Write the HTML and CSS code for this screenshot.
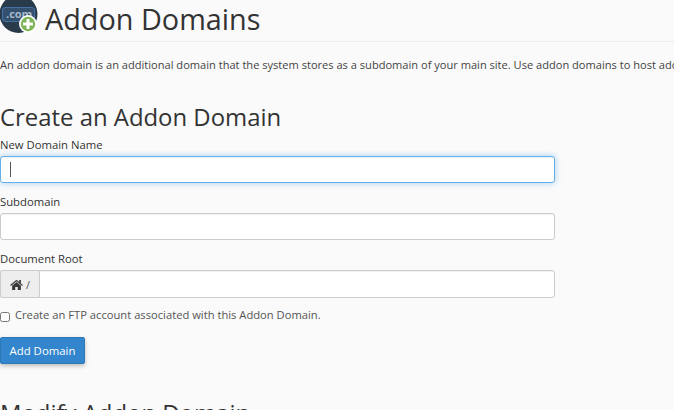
FILE: index.html
```html
<!DOCTYPE html>
<html lang="en">
<head>
<meta charset="utf-8">
<title>Addon Domains</title>
<link rel="stylesheet" href="styles.css">
</head>
<body>
<header class="page-header">
  <svg class="logo" width="38" height="34" viewBox="0 0 38 34" aria-hidden="true">
    <circle cx="18.5" cy="14" r="19" fill="#293a4a"/>
    <rect x="2.5" y="7.5" width="32" height="14" rx="3" fill="#34506f" stroke="#44709f" stroke-width="1.2"/>
    <text x="6" y="18" class="logo-text">.com</text>
    <circle cx="28" cy="24" r="9" fill="#fff"/>
    <circle cx="28" cy="24" r="7.2" fill="#7cb554"/>
    <path d="M28 19v10M23 24h10" stroke="#fff" stroke-width="3"/>
  </svg>
  <h1>Addon Domains</h1>
</header>
<p class="intro">An addon domain is an additional domain that the system stores as a subdomain of your main site. Use addon domains to host additional websites from a single account.</p>
<h2 class="section-title">Create an Addon Domain</h2>
<form class="domain-form">
  <div class="field">
    <label class="field-label" for="domain">New Domain Name</label>
    <div class="input focused" id="domain"><span class="caret"></span></div>
  </div>
  <div class="field">
    <label class="field-label" for="sub">Subdomain</label>
    <input class="input" id="sub" type="text">
  </div>
  <div class="field">
    <label class="field-label" for="root">Document Root</label>
    <div class="input-group">
      <span class="addon">
        <svg width="13" height="11" viewBox="0 0 14 12" aria-hidden="true"><path d="M7 .8 0 6.6l.8 1L7 2.5l6.2 5.1.8-1-2.2-1.8V1.2h-1.9v2L7 .8ZM2.2 7.3V12h3.4V8.6h2.8V12h3.4V7.3L7 3.4 2.2 7.3Z" fill="#3a3a3a"/></svg>
        <span>/</span>
      </span>
      <input class="input group-input" id="root" type="text">
    </div>
  </div>
  <label class="check-row"><input class="check" type="checkbox"><span>Create an FTP account associated with this Addon Domain.</span></label>
  <button class="btn" type="button">Add Domain</button>
</form>
<h2 class="section-title modify">Modify Addon Domain</h2>
</body>
</html>
```
FILE: styles.css
```css
html, body { margin: 0; height: 410px; overflow: hidden; }
body { background: #fafafa; color: #333; font-family: "Open Sans", sans-serif; font-size: 12px; }
.page-header { display: flex; align-items: flex-start; height: 41px; border-bottom: 1px solid #eee; }
.logo { flex: none; }
.logo-text { font-family: "Open Sans", sans-serif; font-size: 11px; font-weight: 700; fill: #a9bacb; }
h1 { margin: 0 0 0 7px; font-size: 28.8px; font-weight: 400; line-height: 38px; white-space: nowrap; }
.intro { margin: 14px 0 0; line-height: 17px; font-size: 11.08px; white-space: nowrap; color: #444; }
.section-title { margin: 29px 0 5px; font-size: 23.9px; font-weight: 400; line-height: 30px; white-space: nowrap; }
.domain-form { width: 555px; }
.field { margin-bottom: 11px; }
.field-label { display: block; font-size: 11.3px; font-weight: 500; line-height: 16px; margin-bottom: 3px; }
.input { display: block; box-sizing: border-box; width: 100%; height: 27px; padding: 0 9px; background: #fff; border: 1px solid #ccc; border-radius: 3px; outline: 0; box-shadow: inset 0 1px 1px rgba(0,0,0,.06); }
.focused { border-color: #66afe9; box-shadow: inset 0 1px 1px rgba(0,0,0,.06), 0 0 6px rgba(102,175,233,.6); display: flex; align-items: center; }
.caret { width: 1px; height: 15px; background: #555; }
.input-group { display: flex; }
.addon { display: flex; align-items: center; gap: 3px; width: 39px; height: 28px; box-sizing: border-box; padding-left: 9px; flex: none; background: #eee; border: 1px solid #ccc; border-right: 0; border-radius: 3px 0 0 3px; font-size: 11px; color: #555; }
.group-input { height: 28px; border-radius: 0 3px 3px 0; }
.check-row { display: flex; align-items: center; gap: 5px; font-size: 11.2px; line-height: 16px; margin-top: -2px; color: #555; }
.check { margin: 4px 0 0; width: 10px; height: 10px; flex: none; }
.btn { display: block; margin-top: 14px; width: 85px; height: 27px; padding: 0; background: #3386ce; color: #fff; border: 1px solid #2e78b8; border-radius: 2px; font: 500 11.4px "Open Sans", sans-serif; box-shadow: 0 2px 4px rgba(0,0,0,.25); }
.modify { margin-top: 34px; }
```
